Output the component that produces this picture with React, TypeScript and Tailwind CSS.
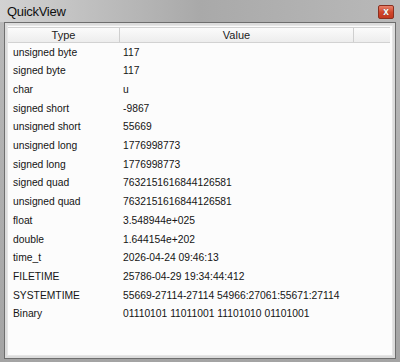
import React from "react";

const rows: [string, string][] = [
  ["unsigned byte", "117"],
  ["signed byte", "117"],
  ["char", "u"],
  ["signed short", "-9867"],
  ["unsigned short", "55669"],
  ["unsigned long", "1776998773"],
  ["signed long", "1776998773"],
  ["signed quad", "7632151616844126581"],
  ["unsigned quad", "7632151616844126581"],
  ["float", "3.548944e+025"],
  ["double", "1.644154e+202"],
  ["time_t", "2026-04-24 09:46:13"],
  ["FILETIME", "25786-04-29 19:34:44:412"],
  ["SYSTEMTIME", "55669-27114-27114 54966:27061:55671:27114"],
  ["Binary", "01110101 11011001 11101010 01101001"],
];

export default function App() {
  return (
    <div
      className="w-[400px] h-[362px] flex flex-col bg-[#b8b8b8] overflow-hidden"
      style={{ fontFamily: '"Liberation Sans", Arial, sans-serif' }}
    >
      {/* title bar */}
      <div className="h-[22px] flex items-center justify-between bg-gradient-to-r from-[#d2d2d2] via-[#a9a9a9] to-[#b9b9b9] pl-[7px] pr-[6px]">
        <span className="text-[13px] tracking-[-0.3px] text-[#101010] pt-[1px]">QuickView</span>
        <div className="w-[16px] h-[14px] mt-[1px] rounded-[2px] border border-[#8a3020] bg-gradient-to-b from-[#e8816a] via-[#d2472c] to-[#c2381f] flex items-center justify-center">
          <span className="text-[10px] leading-none font-bold text-white [text-shadow:0_0_1px_#555]">x</span>
        </div>
      </div>
      {/* body */}
      <div className="flex-1 px-[4px] pb-[3px] bg-gradient-to-b from-[#b9b9b9] to-[#a4a4a4]">
        <div className="h-full border border-[#6e6e6e] p-[2px] bg-[#dcdcdc]">
          <div className="h-full bg-[#fcfcfc] border border-[#e6e6e6] pt-[1px] text-[10.3px] text-[#141414]">
            <div className="flex h-[16px] border-y border-[#d2d2d2] bg-gradient-to-b from-[#fbfbfb] to-[#ededed] text-[#222] text-[11px] mr-[2px]">
              <div className="w-[112px] border-r border-[#cfcfcf] flex items-center justify-center">Type</div>
              <div className="w-[234px] border-r border-[#cfcfcf] flex items-center justify-center">Value</div>
              <div className="flex-1" />
            </div>
            {rows.map(([t, v]) => (
              <div key={t} className="flex h-[18.7px] items-center">
                <div className="w-[115px] pl-[5px] whitespace-nowrap">{t}</div>
                <div className="whitespace-nowrap">{v}</div>
              </div>
            ))}
          </div>
        </div>
      </div>
    </div>
  );
}
